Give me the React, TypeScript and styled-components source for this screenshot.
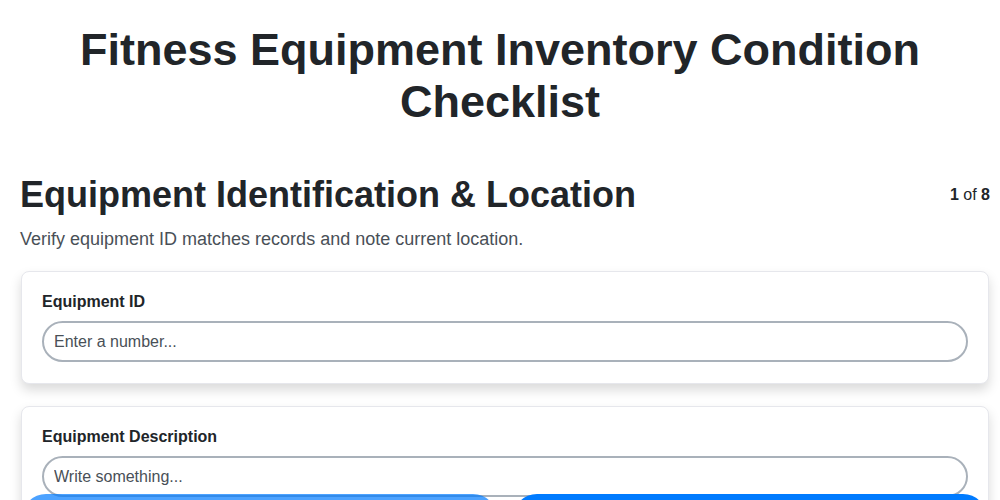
import React from "react";
import styled, { createGlobalStyle } from "styled-components";

const Global = createGlobalStyle`
  html, body { margin: 0; padding: 0; background: #ffffff; }
  body { font-family: "Liberation Sans", Arial, sans-serif; color: #212529; }
  * { box-sizing: border-box; }
`;

const Page = styled.div`
  padding: 24px 10px 80px 20px;
`;

const Title = styled.h1`
  margin: 0 0 45px -10px;
  text-align: center;
  font-size: 45px;
  line-height: 52px;
  font-weight: 700;
  color: #212529;
`;

const HeadRow = styled.div`
  display: flex;
  align-items: center;
  justify-content: space-between;
`;

const SectionTitle = styled.h2`
  margin: 0;
  font-size: 36px;
  line-height: 44px;
  font-weight: 700;
  color: #212529;
`;

const Counter = styled.div`
  font-size: 16px;
  color: #212529;
  b { font-weight: 700; }
`;

const Sub = styled.p`
  margin: 10px 0 20px;
  font-size: 18px;
  line-height: 24px;
  color: #495057;
`;

const Card = styled.div`
  background: #fff;
  border: 1px solid #e6e7ec;
  border-radius: 8px;
  padding: 20px 20px 21px 20px;
  box-shadow: 0 6px 12px rgba(0, 0, 0, 0.15);
  margin: 0 1px 22px 1px;
`;

const Label = styled.label`
  display: block;
  font-size: 16px;
  line-height: 19px;
  font-weight: 700;
  color: #212529;
  margin-bottom: 10px;
`;

const Input = styled.input`
  display: block;
  width: 100%;
  height: 41px;
  border: 2px solid #a9b1ba;
  border-radius: 21px;
  padding: 0 10px;
  font-family: "Liberation Sans", Arial, sans-serif;
  font-size: 16px;
  color: #212529;
  background: #fff;
  outline: none;
  &::placeholder { color: #495057; }
`;

const Footer = styled.div`
  position: fixed;
  left: 0;
  right: 0;
  bottom: -42px;
  display: grid;
  grid-template-columns: 1fr 1fr;
  gap: 16px;
  padding: 0 13px 0 22px;
`;

const NavButton = styled.button<{ $dim?: boolean }>`
  height: 48px;
  border: none;
  border-radius: 24px;
  background: #007bff;
  opacity: ${(p) => (p.$dim ? 0.7 : 1)};
  color: #fff;
  font-family: "Liberation Sans", Arial, sans-serif;
  font-size: 16px;
  font-weight: 700;
`;

export default function App() {
  return (
    <>
      <Global />
      <Page>
        <Title>Fitness Equipment Inventory Condition Checklist</Title>
        <HeadRow>
          <SectionTitle>Equipment Identification &amp; Location</SectionTitle>
          <Counter>
            <b>1</b> of <b>8</b>
          </Counter>
        </HeadRow>
        <Sub>Verify equipment ID matches records and note current location.</Sub>
        <Card>
          <Label>Equipment ID</Label>
          <Input type="text" placeholder="Enter a number..." />
        </Card>
        <Card>
          <Label>Equipment Description</Label>
          <Input type="text" placeholder="Write something..." />
        </Card>
        <Card>
          <Label>Current Location</Label>
          <Input type="text" placeholder="Write something..." />
        </Card>
      </Page>
      <Footer>
        <NavButton $dim>Previous</NavButton>
        <NavButton>Next</NavButton>
      </Footer>
    </>
  );
}
